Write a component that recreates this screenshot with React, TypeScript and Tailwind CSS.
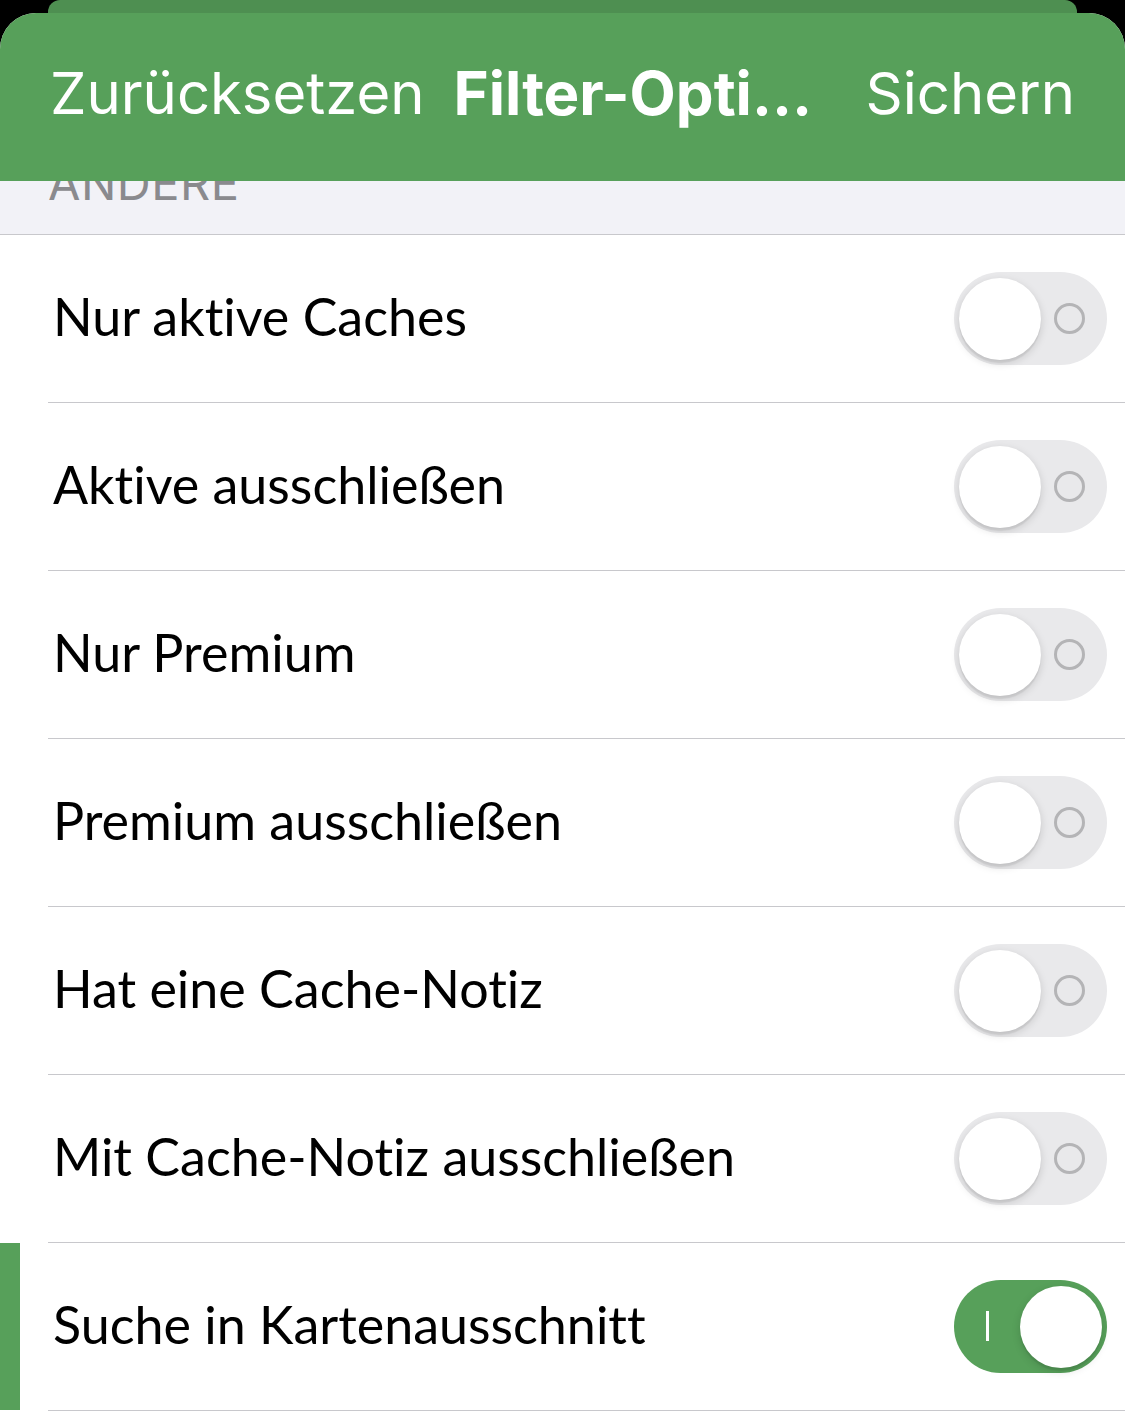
import React from 'react'

const GREEN = 'bg-[#57a05a]'

type Option = { label: string; on: boolean }

const OPTIONS: Option[] = [
  { label: 'Nur aktive Caches', on: false },
  { label: 'Aktive ausschließen', on: false },
  { label: 'Nur Premium', on: false },
  { label: 'Premium ausschließen', on: false },
  { label: 'Hat eine Cache-Notiz', on: false },
  { label: 'Mit Cache-Notiz ausschließen', on: false },
  { label: 'Suche in Kartenausschnitt', on: true },
]

function Toggle({ on }: { on: boolean }) {
  return (
    <div
      className={`relative flex h-[93px] w-[153px] shrink-0 items-center rounded-full p-[5px] ${
        on ? 'justify-end bg-[#57a05a]' : 'justify-start bg-[#e9e9eb]'
      }`}
    >
      {on ? (
        <span className="absolute left-[32px] top-[31px] h-[30px] w-[3px] bg-white" />
      ) : (
        <span className="absolute left-[100px] top-[31px] h-[31px] w-[31px] rounded-full border-[3px] border-[#b4b4b6]" />
      )}
      <span className="relative h-[82px] w-[82px] rounded-full bg-white shadow-[0_3px_8px_rgba(0,0,0,0.15),0_3px_1px_rgba(0,0,0,0.06)]" />
    </div>
  )
}

function OptionRow({ option }: { option: Option }) {
  return (
    <div className="flex h-[168px] bg-white">
      <div className="w-[48px] shrink-0">
        {option.on && <div className={`h-[167px] w-[20px] ${GREEN}`} />}
      </div>
      <div className="flex flex-1 items-center justify-between border-b border-[#c8c8cc] pl-[5px] pr-[18px]">
        <span className="pb-[5px] font-['Lato',sans-serif] text-[52px] leading-none text-black [font-variant-ligatures:none]">
          {option.label}
        </span>
        <Toggle on={option.on} />
      </div>
    </div>
  )
}

export default function App() {
  return (
    <div className="flex h-[1418px] w-[1125px] flex-col overflow-hidden bg-black">
      <div className="mx-[48px] h-[13px] shrink-0 rounded-t-[12px] bg-[#4e8f51]" />
      <div className="flex flex-1 flex-col overflow-hidden rounded-t-[36px] bg-white">
        <header
          className={`flex h-[168px] shrink-0 items-center px-[50px] pb-[8px] font-['Inter',sans-serif] text-[58px] leading-none text-white ${GREEN}`}
        >
          <span>Zurücksetzen</span>
          <span className="ml-[29px] flex-1 whitespace-nowrap text-[60px] font-bold">Filter-Opti…</span>
          <span>Sichern</span>
        </header>
        <div className="h-[54px] shrink-0 overflow-hidden border-b border-[#c8c8cc] bg-[#f2f2f7] px-[48px]">
          <div className="mt-[-22px] font-['Inter',sans-serif] text-[47px] leading-[47px] tracking-[0.5px] text-[#8a8a8e]">
            ANDERE
          </div>
        </div>
        {OPTIONS.map((option) => (
          <OptionRow key={option.label} option={option} />
        ))}
      </div>
    </div>
  )
}
